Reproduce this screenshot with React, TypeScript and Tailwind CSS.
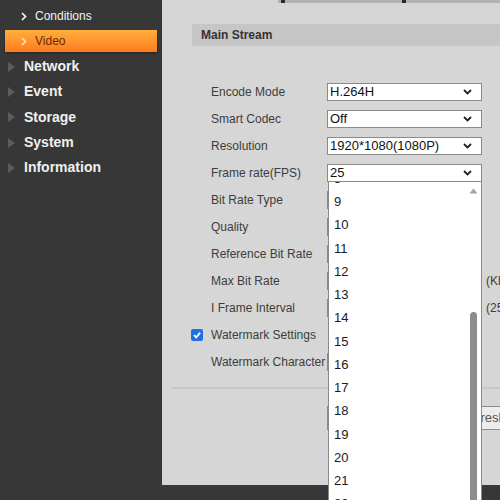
import React from "react";

const font = { fontFamily: '"Liberation Sans", Arial, sans-serif' };

function Chevron() {
  return (
    <svg width="9" height="6" viewBox="0 0 9 6" className="shrink-0">
      <polyline points="1,1 4.5,4.5 8,1" fill="none" stroke="#222" strokeWidth="1.8" />
    </svg>
  );
}

function SelectBox({ value }: { value: string }) {
  return (
    <div className="w-[155px] h-[18px] shrink-0 bg-white border border-[#8a8a8a] flex items-center justify-between pl-[2px] pr-[9px] text-[13px] text-[#111] leading-none">
      <span>{value}</span>
      <Chevron />
    </div>
  );
}

function InputBox() {
  return <div className="w-[155px] h-[18px] shrink-0 bg-white border border-[#8a8a8a]" />;
}

function Row({ label, children, check }: { label: string; children?: React.ReactNode; check?: boolean }) {
  return (
    <div className="h-[27px] flex items-center">
      <div className="w-[29px] shrink-0 flex justify-center pl-[1px]">
        {check && (
          <div className="w-[12px] h-[12px] rounded-[2px] bg-[#1e6fe6] flex items-center justify-center">
            <svg width="10" height="10" viewBox="0 0 10 10">
              <polyline points="2,5.2 4.2,7.4 8.2,2.6" fill="none" stroke="#fff" strokeWidth="1.8" />
            </svg>
          </div>
        )}
      </div>
      <div className="w-[116px] shrink-0 text-[12px] text-[#3d3d3d] whitespace-nowrap">{label}</div>
      {children}
    </div>
  );
}

function SideSub({ label, active }: { label: string; active?: boolean }) {
  return (
    <div
      className={
        active
          ? "mx-[5px] h-[22px] flex items-center bg-gradient-to-b from-[#ffae3c] to-[#ff7a1c] shadow-[0_1px_2px_rgba(0,0,0,0.4)]"
          : "mx-[5px] h-[20px] flex items-center"
      }
    >
      <svg width="6" height="9" viewBox="0 0 6 9" className="ml-[16px]">
        <polyline points="1,1 4.5,4.5 1,8" fill="none" stroke={active ? "#ffe2b8" : "#f2f2f2"} strokeWidth="1.7" />
      </svg>
      <span className={"ml-[8px] text-[12px] " + (active ? "text-[#6a2c00]" : "text-[#f2f2f2]")}>{label}</span>
    </div>
  );
}

function SideTop({ label }: { label: string }) {
  return (
    <div className="h-[25.3px] flex items-center">
      <svg width="8" height="10" viewBox="0 0 8 10" className="ml-[8px]">
        <polygon points="0,0 7,5 0,10" fill="#5c5c5c" />
      </svg>
      <span className="ml-[8px] text-[14px] font-bold text-[#f0f0f0]">{label}</span>
    </div>
  );
}

const fps = Array.from({ length: 15 }, (_, i) => String(i + 8));

export default function App() {
  return (
    <div className="w-[500px] h-[500px] bg-[#373737] flex overflow-hidden" style={font}>
      <div className="w-[162px] shrink-0 pt-[6px] flex flex-col">
        <SideSub label="Conditions" />
        <div className="h-[4px]" />
        <SideSub label="Video" active />
        <div className="h-[2px]" />
        <SideTop label="Network" />
        <SideTop label="Event" />
        <SideTop label="Storage" />
        <SideTop label="System" />
        <SideTop label="Information" />
      </div>

      <div className="relative w-[338px] h-[485px] shrink-0 bg-[#d6d6d6] flex flex-col">
        <div className="ml-[116px] h-[3px] bg-[#b2b2b2] flex">
          <div className="ml-[3px] w-[4px] bg-[#2a2a2a]" />
          <div className="ml-[117px] w-[4px] bg-[#2a2a2a]" />
        </div>

        <div className="mt-[21px] ml-[30px] h-[22px] bg-[#c6c6c6] flex items-center pl-[9px] text-[12px] font-bold text-[#333]">
          Main Stream
        </div>

        <div className="mt-[32px] ml-[20px] flex flex-col">
          <Row label="Encode Mode"><SelectBox value="H.264H" /></Row>
          <Row label="Smart Codec"><SelectBox value="Off" /></Row>
          <Row label="Resolution"><SelectBox value="1920*1080(1080P)" /></Row>
          <Row label="Frame rate(FPS)"><SelectBox value="25" /></Row>
          <Row label="Bit Rate Type"><SelectBox value="Variable" /></Row>
          <Row label="Quality"><SelectBox value="Best" /></Row>
          <Row label="Reference Bit Rate"><InputBox /></Row>
          <Row label="Max Bit Rate">
            <InputBox />
            <span className="ml-[4px] shrink-0 whitespace-nowrap text-[12px] text-[#3d3d3d]">(Kb/S)</span>
          </Row>
          <Row label="I Frame Interval">
            <InputBox />
            <span className="ml-[4px] shrink-0 whitespace-nowrap text-[12px] text-[#3d3d3d]">(25~150)</span>
          </Row>
          <Row label="Watermark Settings" check />
          <Row label="Watermark Character"><InputBox /></Row>
        </div>

        <div className="mt-[12px] ml-[10px] h-[2px] bg-[#c8c8c8]" />

        <div className="mt-[17px] ml-[165px] flex gap-[8px]">
          <div className="w-[58px] h-[24px] shrink-0 bg-[#ececec] border border-[#8c8c8c] flex items-center justify-center text-[13px] text-[#333]">Default</div>
          <div className="w-[51px] h-[24px] shrink-0 bg-[#ececec] border border-[#8c8c8c] flex items-center justify-center text-[13px] text-[#333]">Save</div>
          <div className="w-[62px] h-[24px] shrink-0 bg-[#ececec] border border-[#8c8c8c] flex items-center justify-center text-[13px] text-[#555]">Refresh</div>
        </div>

        {/* open frame-rate list */}
        <div className="absolute left-[166px] top-[181px] w-[154px] h-[330px] bg-white border border-[#8a8a8a] overflow-hidden">
          <div className="mt-[-15px]">
            {fps.map((v) => (
              <div key={v} className="h-[23.25px] flex items-center pl-[5px] text-[13px] text-[#1a1a1a]">
                {v}
              </div>
            ))}
          </div>
          <div className="absolute right-[3px] top-0 bottom-0 w-[9px]">
            <svg width="9" height="6" viewBox="0 0 9 6" className="absolute top-[6px] left-0">
              <polygon points="4.5,0.5 8.5,5.5 0.5,5.5" fill="#a3a3a3" />
            </svg>
            <div className="absolute top-[130px] left-[1px] w-[7px] h-[220px] rounded-t-[4px] bg-[#8d8d8d]" />
          </div>
        </div>
      </div>
    </div>
  );
}
